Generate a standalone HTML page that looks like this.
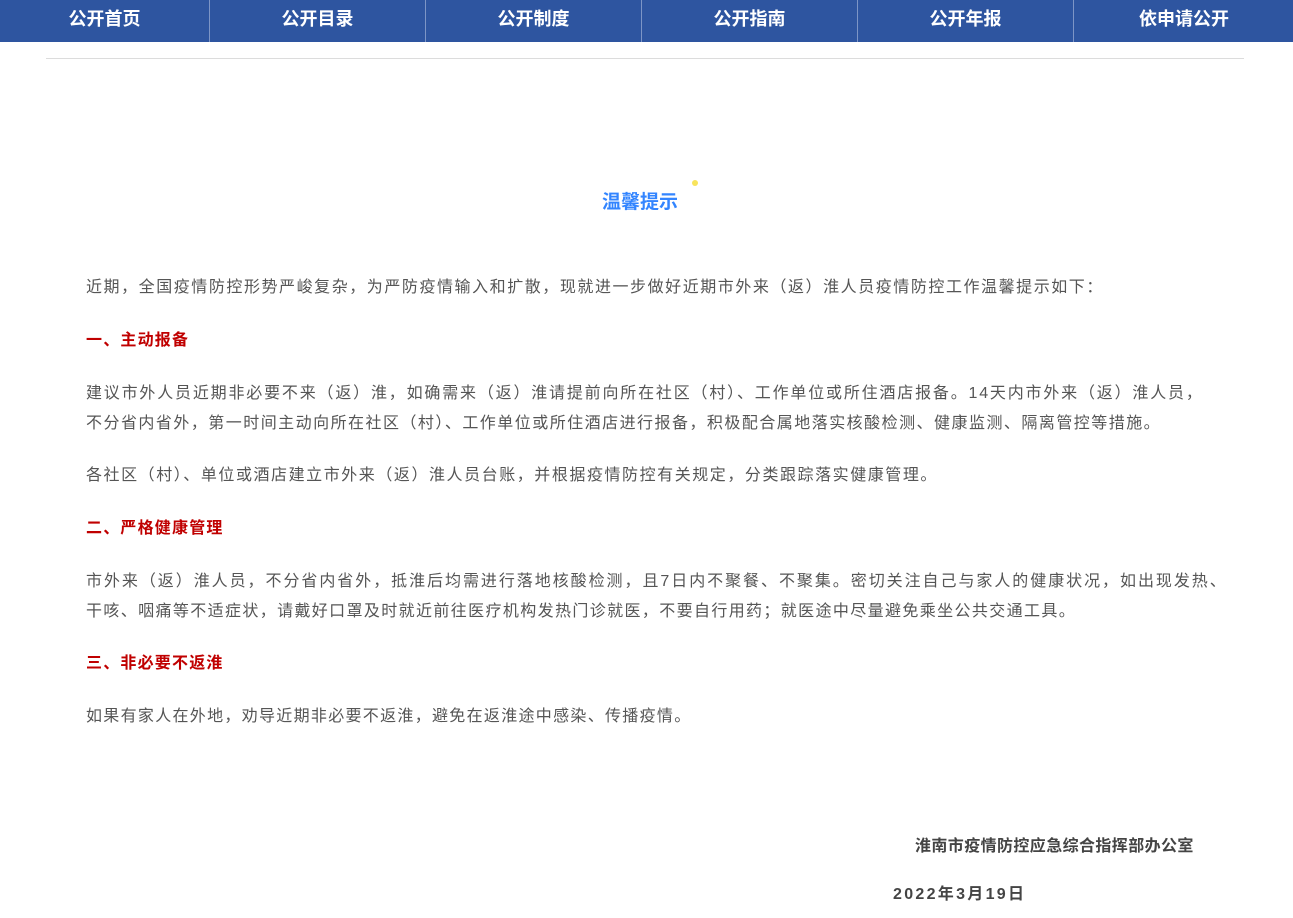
<!DOCTYPE html>
<html><head><meta charset="utf-8"><style>
body{margin:0;width:1293px;height:918px;background:#fff;overflow:hidden;font-family:"Liberation Sans","Noto Sans CJK SC",sans-serif;position:relative}
.nav{position:absolute;left:0;top:0;width:1293px;height:42px;background:#2e55a0;display:flex}
.nav div{width:215px;color:#fff;font-weight:bold;font-size:18px;text-align:center;line-height:38px;border-right:1px solid #7d95c6;flex:none}
.nav div:first-child{width:209px}
.nav div:last-child{border-right:none;width:220px}
.hr{position:absolute;left:46px;top:58px;width:1198px;height:1px;background:#dcdcdc}
.t{position:absolute;left:86px;font-size:16px;color:#555;letter-spacing:1.55px;white-space:nowrap;line-height:20px}
.r{color:#c00000;font-weight:bold;letter-spacing:1.2px}
</style></head><body>
<div class="nav"><div>公开首页</div><div>公开目录</div><div>公开制度</div><div>公开指南</div><div>公开年报</div><div>依申请公开</div></div>
<div class="hr"></div>
<div style="position:absolute;left:692px;top:180px;width:6px;height:6px;border-radius:50%;background:#f8e45c"></div>
<div style="position:absolute;left:0;width:1280px;top:192px;text-align:center;color:#3385ff;font-weight:bold;font-size:19px;line-height:22px">温馨提示</div>
<div class="t" style="top:278px">近期，全国疫情防控形势严峻复杂，为严防疫情输入和扩散，现就进一步做好近期市外来（返）淮人员疫情防控工作温馨提示如下：</div>
<div class="t r" style="top:331px">一、主动报备</div>
<div class="t" style="top:384px;letter-spacing:1.81px">建议市外人员近期非必要不来（返）淮，如确需来（返）淮请提前向所在社区（村）、工作单位或所住酒店报备。14天内市外来（返）淮人员，</div>
<div class="t" style="top:414px;letter-spacing:1.47px">不分省内省外，第一时间主动向所在社区（村）、工作单位或所住酒店进行报备，积极配合属地落实核酸检测、健康监测、隔离管控等措施。</div>
<div class="t" style="top:466px">各社区（村）、单位或酒店建立市外来（返）淮人员台账，并根据疫情防控有关规定，分类跟踪落实健康管理。</div>
<div class="t r" style="top:519px">二、严格健康管理</div>
<div class="t" style="top:572px;letter-spacing:1.95px">市外来（返）淮人员，不分省内省外，抵淮后均需进行落地核酸检测，且7日内不聚餐、不聚集。密切关注自己与家人的健康状况，如出现发热、</div>
<div class="t" style="top:602px;letter-spacing:1.37px">干咳、咽痛等不适症状，请戴好口罩及时就近前往医疗机构发热门诊就医，不要自行用药；就医途中尽量避免乘坐公共交通工具。</div>
<div class="t r" style="top:654px">三、非必要不返淮</div>
<div class="t" style="top:707px;letter-spacing:1.3px">如果有家人在外地，劝导近期非必要不返淮，避免在返淮途中感染、传播疫情。</div>
<div class="t" style="top:837px;left:915px;font-weight:bold;color:#444;font-size:16px;letter-spacing:0.4px">淮南市疫情防控应急综合指挥部办公室</div>
<div class="t" style="top:885px;left:893px;font-weight:bold;color:#444;font-size:16px;letter-spacing:2.3px">2022年3月19日</div>
</body></html>
